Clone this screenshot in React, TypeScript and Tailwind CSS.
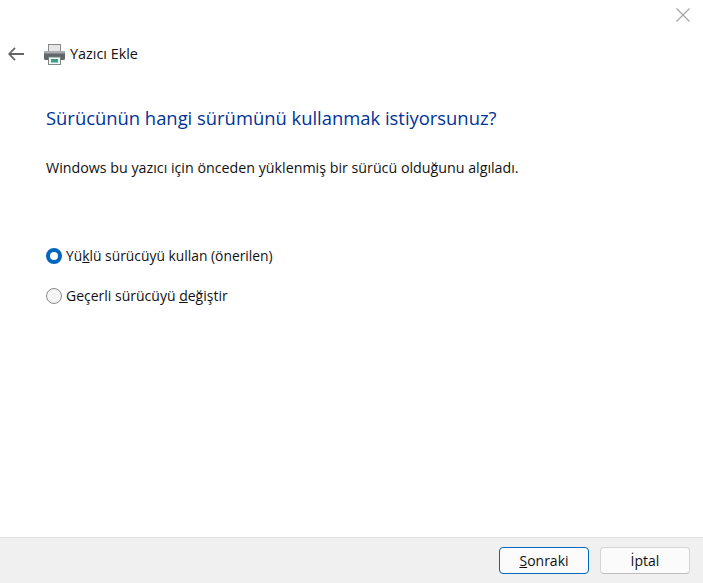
export default function App() {
  return (
    <div className="w-[703px] h-[583px] bg-white flex flex-col text-[#111111] overflow-hidden font-['Open_Sans',sans-serif]">
      <div className="flex justify-end h-[30px] pt-[8px] pr-[13px]">
        <svg width="14" height="14" viewBox="0 0 14 14" stroke="#a3a3a3" strokeWidth="1.1" fill="none"><path d="M.5.5l13 13M13.5.5l-13 13" /></svg>
      </div>
      <div className="flex items-center h-[48px] pl-[8px]">
        <svg width="16" height="14" viewBox="0 0 16 14" stroke="#666666" strokeWidth="1.8" fill="none"><path d="M7 .8L1.2 7l5.8 6.2M1.2 7H16" /></svg>
        <svg className="ml-[20px]" width="21" height="21" viewBox="0 0 21 21">
          <rect x="4.5" y=".5" width="12" height="7.5" fill="#e6e6e6" stroke="#7f7f7f" strokeWidth=".9" />
          <rect x="0" y="7" width="21" height="9" rx="1.5" fill="#62676b" />
          <rect x="0" y="7" width="21" height="2.5" rx="1" fill="#a8acb0" />
          <rect x="4.5" y="13" width="12" height="7.5" fill="#eef6f2" stroke="#6f7f78" strokeWidth=".9" />
          <rect x="7" y="15" width="7" height="3.5" fill="#3f9d86" />
        </svg>
        <span className="ml-[5px] text-[14.4px] leading-5">Yazıcı Ekle</span>
      </div>
      <div className="pl-[46px] flex flex-col flex-1">
        <h1 className="mt-[28px] text-[18.4px] leading-6 text-[#003399] font-normal">Sürücünün hangi sürümünü kullanmak istiyorsunuz?</h1>
        <p className="mt-[28px] text-[14.26px] leading-5">Windows bu yazıcı için önceden yüklenmiş bir sürücü olduğunu algıladı.</p>
        <div className="mt-[68px] flex items-center h-5">
          <span className="w-4 h-4 rounded-full border-[4.5px] border-[#0067c0] bg-white" />
          <span className="ml-1 text-[13.85px] leading-5">Yü<span className="underline">k</span>lü sürücüyü kullan (önerilen)</span>
        </div>
        <div className="mt-[20px] flex items-center h-5">
          <span className="w-4 h-4 rounded-full border border-[#8a8a8a] bg-[#f5f5f5]" />
          <span className="ml-1 text-[14px] leading-5">Geçerli sürücüyü <span className="underline">d</span>eğiştir</span>
        </div>
      </div>
      <div className="h-[46px] bg-[#f0f0f0] border-t border-[#dfdfdf] flex justify-end items-center gap-[11px] pr-[13px]">
        <button className="w-[90px] h-[27px] rounded-[4px] bg-[#fbfbfb] border border-[#0067c0] text-[14px] leading-5"><span className="underline">S</span>onraki</button>
        <button className="w-[90px] h-[27px] rounded-[4px] bg-[#fbfbfb] border border-[#d6d6d6] border-b-[#bdbdbd] text-[14px] leading-5">İptal</button>
      </div>
    </div>
  );
}
